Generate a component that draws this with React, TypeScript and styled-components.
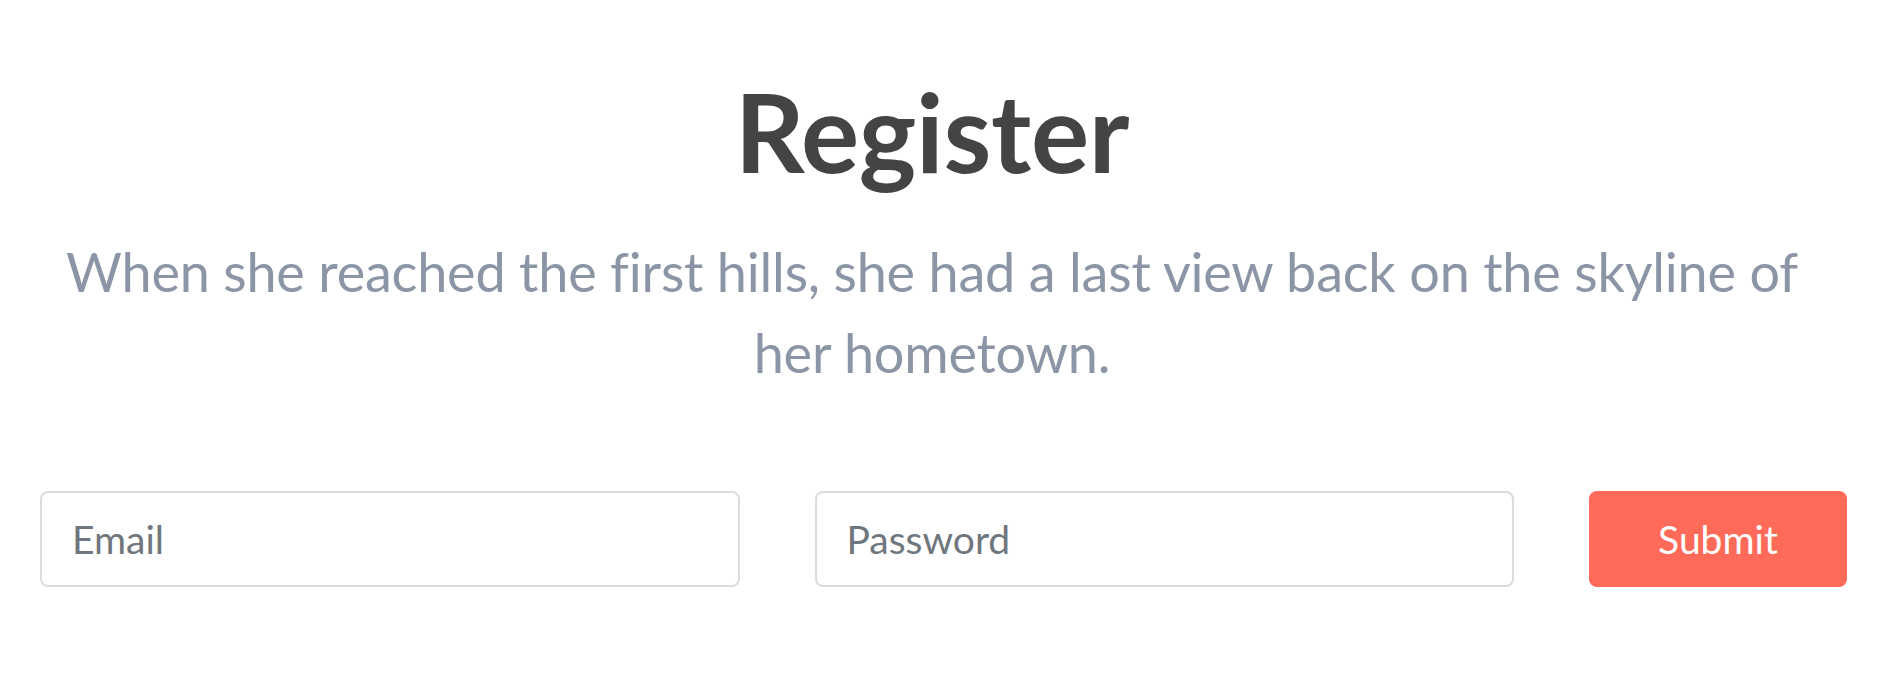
import React from "react";
import styled, { createGlobalStyle } from "styled-components";

const Global = createGlobalStyle`
  html, body { margin: 0; padding: 0; background: #ffffff; }
  body { font-family: Lato, "Open Sans", sans-serif; }
  * { box-sizing: border-box; }
`;

const Page = styled.main`
  padding: 65px 40px 0;
  display: flex;
  flex-direction: column;
  align-items: stretch;
`;

const Header = styled.header`
  padding-right: 23px;
  text-align: center;
`;

const Title = styled.h1`
  margin: 0;
  font-family: Lato, sans-serif;
  font-weight: 700;
  font-size: 109px;
  letter-spacing: -0.3px;
  line-height: 132px;
  color: #444444;
`;

const Lead = styled.p`
  margin: 34px 0 0;
  font-family: Lato, sans-serif;
  font-weight: 400;
  font-size: 54px;
  letter-spacing: -0.2px;
  line-height: 81px;
  color: #8b95a5;
`;

const Form = styled.form`
  margin-top: 98px;
  display: flex;
  gap: 75px;
  align-items: stretch;
`;

const Field = styled.input`
  flex: 1;
  min-width: 0;
  height: 96px;
  padding: 0 30px;
  border: 2px solid #d9dce0;
  border-radius: 8px;
  background: #ffffff;
  font-family: Lato, sans-serif;
  font-size: 39px;
  color: #495057;
  outline: none;
  &::placeholder { color: #6f767d; opacity: 1; }
`;

const Button = styled.button`
  flex: 0 0 258px;
  height: 96px;
  border: none;
  border-radius: 8px;
  background: #ff6a59;
  color: #ffffff;
  font-family: Lato, sans-serif;
  font-size: 39px;
  cursor: pointer;
`;

export default function App() {
  return (
    <>
      <Global />
      <Page>
        <Header>
          <Title>Register</Title>
          <Lead>
            When she reached the first hills, she had a last view back on the skyline of her hometown.
          </Lead>
        </Header>
        <Form onSubmit={(e) => e.preventDefault()}>
          <Field type="email" placeholder="Email" />
          <Field type="password" placeholder="Password" />
          <Button type="submit">Submit</Button>
        </Form>
      </Page>
    </>
  );
}
